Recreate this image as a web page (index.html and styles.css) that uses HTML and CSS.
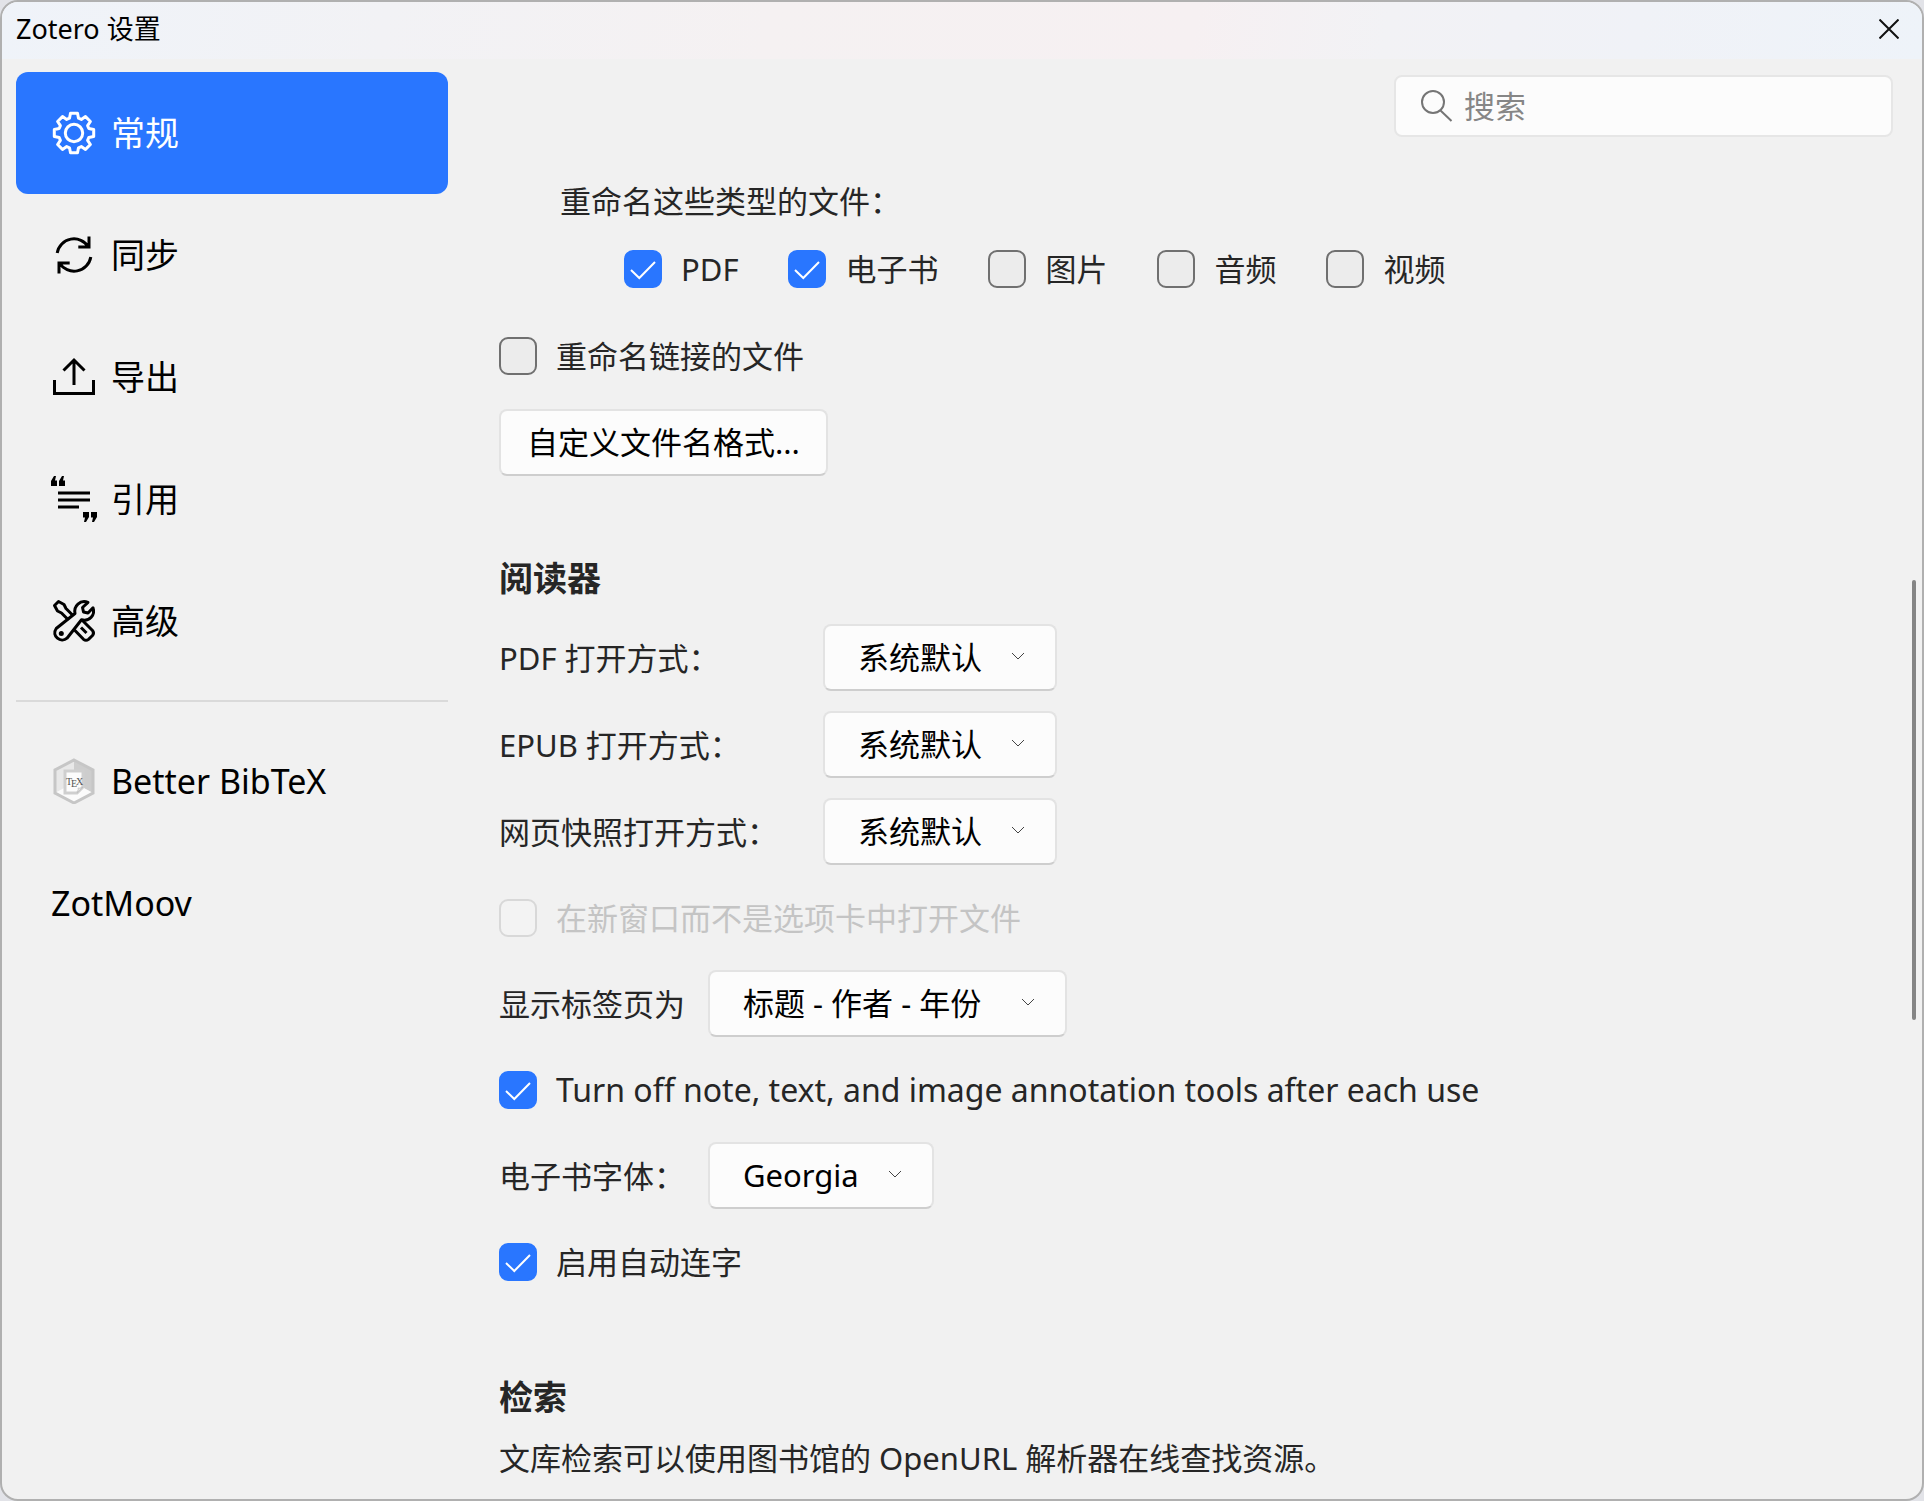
FILE: index.html
```html
<!DOCTYPE html>
<html lang="zh-CN">
<head>
<meta charset="utf-8">
<title>Zotero 设置</title>
<link rel="stylesheet" href="styles.css">
</head>
<body>
<div class="window">
  <header class="titlebar">
    <h1 class="title">Zotero 设置</h1>
    <button class="close" type="button" aria-label="关闭">
      <svg width="20" height="20" viewBox="0 0 20 20"><path d="M0.5 0.5 19.5 19.5M19.5 0.5 0.5 19.5"/></svg>
    </button>
  </header>
  <div class="body">
    <nav class="nav">
      <a class="nav-item active" href="#general">
        <svg class="icon" viewBox="-23 -23 46 46"><path stroke-linejoin="round" d="M-4.5-14.8-3.5-19.7H3.5L4.5-14.8 7.3-13.6 11.5-16.4 16.4-11.5 13.6-7.3 14.8-4.5 19.7-3.5V3.5L14.8 4.5 13.6 7.3 16.4 11.5 11.5 16.4 7.3 13.6 4.5 14.8 3.5 19.7H-3.5L-4.5 14.8-7.3 13.6-11.5 16.4-16.4 11.5-13.6 7.3-14.8 4.5-19.7 3.5V-3.5L-14.8-4.5-13.6-7.3-16.4-11.5-11.5-16.4-7.3-13.6Z"/><circle r="8.7"/></svg>
        <span>常规</span>
      </a>
      <a class="nav-item" href="#sync">
        <svg class="icon" viewBox="0 0 46 46"><path d="M6.2 21A17 17 0 0 1 37.5 15M38 4.5V15H27.3M39.8 25A17 17 0 0 1 8.5 31M8 41.5V31H18.7"/></svg>
        <span>同步</span>
      </a>
      <a class="nav-item" href="#export">
        <svg class="icon" viewBox="0 0 46 46"><path d="M23 6V31M12.5 16.5 23 6 33.5 16.5M3.5 26V39.5H42.5V26"/></svg>
        <span>导出</span>
      </a>
      <a class="nav-item" href="#cite">
        <svg class="icon" viewBox="0 0 46 46"><path d="M7 17H39M7 24H39M7 31H28"/><path class="solid" d="M0 10V5L3 0H5L4 4.500H6V10ZM8 10V5L11 0H13L12 4.500H14V10ZM38 36V41L35 46H33L34 41.500H32V36ZM46 36V41L43 46H41L42 41.500H40V36Z"/></svg>
        <span>引用</span>
      </a>
      <a class="nav-item" href="#advanced">
        <svg class="icon" viewBox="0 0 46 46"><g stroke-linejoin="round"><path d="M17.500 22 10.500 15 6.500 13 3.500 7.500 7.500 3.500 13 6.500 15 10.500 22 17.500"/><path d="M5.200 30.500 24 15.500C22.500 8 29 1.500 37 4.300L31.500 9.500 32.500 14 37 15 42 9.800C44.500 17 38.500 24 30.500 21.800L16 40.200C10 45.500 0 38 5.200 30.500Z"/><path d="M31 22 41.500 32.500Q43.500 35 41.500 37.500L37.500 41.300Q35 43.300 32.500 41.300L23.500 32"/><path d="M30 29.500 35.500 35"/></g><circle class="solid" cx="10.300" cy="35.500" r="2.500"/></svg>
        <span>高级</span>
      </a>
      <hr class="nav-rule">
      <a class="nav-item" href="#bbt">
        <svg class="icon plain" viewBox="0 0 46 46"><path fill="#e8e8e8" d="M23 2 42 12V35L23 45 4 35V12Z"/><path fill="#cdcdcd" d="M23 2 42 12V35L32 30V12H23Z"/><path fill="#fbfbfb" d="M4 35 13 30H33L42 35 23 45Z"/><path fill="none" stroke="#c6c6c6" d="M23 2 42 12V35L23 45 4 35V12Z"/><path fill="#fcfcfc" stroke="#cfcfcf" d="M14 13H32V29L26 35H14Z"/><path fill="#e4e4e4" stroke="#bbb" stroke-width=".6" d="M26 35Q28 32 27 30 30 31 32 29Z"/><g font-family="Liberation Serif, serif" font-size="10" fill="#555"><text x="15" y="27">T</text><text x="20" y="29">E</text><text x="25" y="27">X</text></g></svg>
        <span>Better BibTeX</span>
      </a>
      <a class="nav-item" href="#zotmoov"><span>ZotMoov</span></a>
    </nav>

    <main class="main">
      <label class="search">
        <svg width="32" height="32" viewBox="0 0 32 32"><circle cx="12" cy="12" r="11"/><path d="M19.500 20.500 30.500 31"/></svg>
        <input type="search" placeholder="搜索" aria-label="搜索">
      </label>

      <section class="rename">
        <p class="types-title">重命名这些类型的文件：</p>
        <div class="types">
          <label class="check"><span class="tick"><input type="checkbox" checked><svg viewBox="0 0 38 38"><path d="M7 20 15.300 28 31 12"/></svg></span>PDF</label>
          <label class="check"><span class="tick"><input type="checkbox" checked><svg viewBox="0 0 38 38"><path d="M7 20 15.300 28 31 12"/></svg></span>电子书</label>
          <label class="check"><span class="tick"><input type="checkbox"></span>图片</label>
          <label class="check"><span class="tick"><input type="checkbox"></span>音频</label>
          <label class="check"><span class="tick"><input type="checkbox"></span>视频</label>
        </div>
        <label class="check"><span class="tick"><input type="checkbox"></span>重命名链接的文件</label>
        <button class="button" type="button">自定义文件名格式...</button>
      </section>

      <section class="reader">
        <h2>阅读器</h2>
        <div class="handlers">
          <label for="pdf">PDF 打开方式：</label>
          <span class="select"><select id="pdf"><option>系统默认</option></select><svg viewBox="0 0 14 8"><path d="M1 1 7 7 13 1"/></svg></span>
          <label for="epub">EPUB 打开方式：</label>
          <span class="select"><select id="epub"><option>系统默认</option></select><svg viewBox="0 0 14 8"><path d="M1 1 7 7 13 1"/></svg></span>
          <label for="snapshot">网页快照打开方式：</label>
          <span class="select"><select id="snapshot"><option>系统默认</option></select><svg viewBox="0 0 14 8"><path d="M1 1 7 7 13 1"/></svg></span>
        </div>
        <div class="row"><label class="check disabled"><span class="tick"><input type="checkbox" disabled></span>在新窗口而不是选项卡中打开文件</label></div>
        <div class="row">
          <label class="field" for="tabs">显示标签页为</label>
          <span class="select wide"><select id="tabs"><option>标题 - 作者 - 年份</option></select><svg viewBox="0 0 14 8"><path d="M1 1 7 7 13 1"/></svg></span>
        </div>
        <div class="row"><label class="check english"><span class="tick"><input type="checkbox" checked><svg viewBox="0 0 38 38"><path d="M7 20 15.300 28 31 12"/></svg></span>Turn off note, text, and image annotation tools after each use</label></div>
        <div class="row">
          <label class="field" for="font">电子书字体：</label>
          <span class="select"><select id="font"><option>Georgia</option></select><svg viewBox="0 0 14 8"><path d="M1 1 7 7 13 1"/></svg></span>
        </div>
        <div class="row"><label class="check"><span class="tick"><input type="checkbox" checked><svg viewBox="0 0 38 38"><path d="M7 20 15.300 28 31 12"/></svg></span>启用自动连字</label></div>
      </section>

      <section class="locate">
        <h2>检索</h2>
        <p>文库检索可以使用图书馆的 OpenURL 解析器在线查找资源。</p>
      </section>
    </main>
  </div>
  <div class="scroll-thumb"></div>
</div>
</body>
</html>
```
FILE: styles.css
```css
* {
  box-sizing: border-box;
}

body {
  margin: 0;
  background: #e2e3e8;
  color: #262626;
  font: 31px/42px "Noto Sans", "Noto Sans CJK SC", sans-serif;
}

h1, h2, p {
  margin: 0;
}

button, input, select {
  font: inherit;
}

.window {
  position: relative;
  display: flex;
  flex-direction: column;
  min-height: 100vh;
  border: 2px solid #b0b0b0;
  border-radius: 18px;
  background: #f1f1f1;
  overflow: hidden;
}

.titlebar {
  display: flex;
  align-items: center;
  justify-content: space-between;
  height: 57px;
  padding: 0 23px 3px 14px;
  background: linear-gradient(100deg, #eff3f9, #f2f2f5 20%, #f5f1f2 40%, #f6f0f2 62%, #f2f2f5 72%, #f0f2f7 85%, #eef3f9);
}

.title {
  color: #000;
  font-size: 27px;
  font-weight: 400;
}

.close {
  display: flex;
  padding: 0;
  border: 0;
  background: none;
}

.close svg {
  fill: none;
  stroke: #111;
  stroke-width: 2;
}

.body {
  display: flex;
  flex: 1;
}

.nav {
  flex: 0 0 446px;
  padding: 13px 0 0 14px;
}

.nav-item {
  display: flex;
  align-items: center;
  gap: 14px;
  height: 122px;
  padding: 0 0 1px 35px;
  border-radius: 12px;
  color: #000;
  font-size: 34px;
  text-decoration: none;
}

.nav-item.active {
  background: #2976ff;
  color: #fff;
}

.icon {
  flex: none;
  width: 46px;
  height: 46px;
  fill: none;
  stroke: currentColor;
  stroke-width: 3;
}

.icon .solid {
  fill: currentColor;
  stroke: none;
}

.icon.plain {
  stroke: none;
}

.nav-rule {
  height: 2px;
  margin: 18px 0;
  border: 0;
  background: #dadada;
}

.main {
  display: flex;
  flex: 1;
  flex-direction: column;
  min-width: 0;
  padding: 16px 29px 16px 51px;
}

.search {
  display: flex;
  align-items: center;
  align-self: flex-end;
  gap: 11px;
  width: 499px;
  height: 62px;
  padding: 0 25px;
  border: 2px solid #e6e6e6;
  border-radius: 8px;
  background: #fcfcfc;
}

.search svg {
  flex: none;
  fill: none;
  stroke: #757575;
  stroke-width: 2;
}

.search input {
  flex: 1;
  min-width: 0;
  padding: 0;
  border: 0;
  outline: 0;
  background: none;
}

.search input::placeholder {
  color: #868686;
}

.rename {
  display: flex;
  flex-direction: column;
  align-items: flex-start;
  padding-top: 43px;
}

.types-title {
  padding-left: 61px;
}

.types {
  display: flex;
  flex-wrap: wrap;
  gap: 50px;
  padding: 26px 0 45px 125px;
}

.check {
  display: flex;
  align-items: center;
  gap: 19px;
}

.check.english {
  font-size: 32px;
}

.tick {
  display: grid;
  flex: none;
}

.tick input,
.tick svg {
  grid-area: 1 / 1;
  width: 38px;
  height: 38px;
  margin: 0;
}

.tick input {
  appearance: none;
  border: 2px solid #707070;
  border-radius: 9px;
  background: #ececec;
}

.tick input:checked {
  border-color: #2976ff;
  background: #2976ff;
}

.tick input:disabled {
  border-color: #d8d8d8;
  background: #f3f3f3;
}

.tick svg {
  fill: none;
  stroke: #fff;
  stroke-width: 2;
  pointer-events: none;
}

.disabled {
  color: #c4c4c4;
}

.button,
.select select {
  height: 67px;
  border: 2px solid #e3e3e3;
  border-bottom-color: #cecece;
  border-radius: 8px;
  background: #fcfcfc;
  color: #000;
}

.button {
  margin-top: 32px;
  padding: 0 26px 2px;
}

.reader {
  display: flex;
  flex-direction: column;
  gap: 19px;
  padding-top: 80px;
}

h2 {
  font-size: 34px;
  font-weight: 700;
  line-height: 44px;
}

.reader h2 {
  padding-bottom: 5px;
}

.handlers {
  display: grid;
  grid-template-columns: 324px 1fr;
  align-items: center;
  gap: 20px 0;
}

.row {
  display: flex;
  align-items: center;
  height: 67px;
}

.field {
  flex: 0 0 209px;
}

.select {
  display: grid;
  justify-self: start;
  align-items: center;
}

.select.wide {
  min-width: 359px;
}

.select select,
.select svg {
  grid-area: 1 / 1;
}

.select select {
  appearance: none;
  padding: 0 73px 2px 33px;
}

.select svg {
  justify-self: end;
  width: 14px;
  height: 8px;
  margin: 0 32px 4px 0;
  fill: none;
  stroke: #444;
  pointer-events: none;
}

.locate {
  padding-top: 80px;
}

.locate p {
  padding-top: 18px;
}

.scroll-thumb {
  position: absolute;
  top: 578px;
  right: 6px;
  width: 4px;
  height: 440px;
  border-radius: 2px;
  background: #858585;
}
```
